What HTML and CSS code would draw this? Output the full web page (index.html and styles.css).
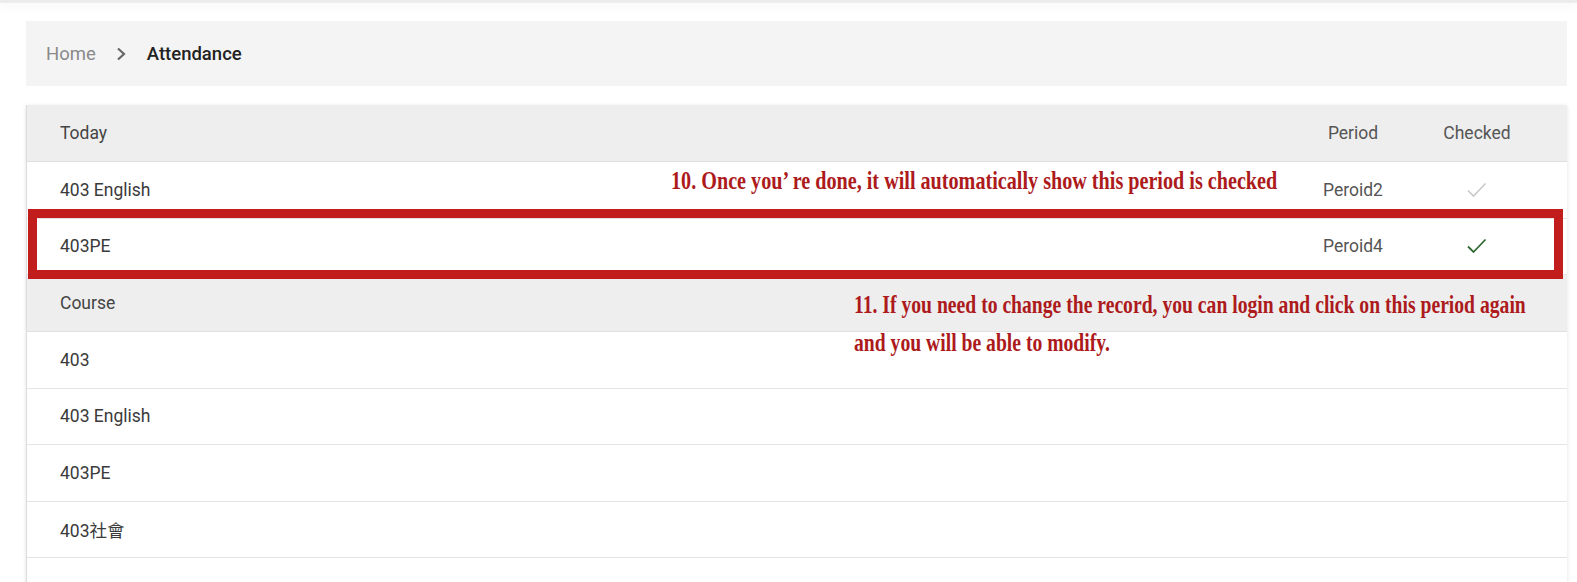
FILE: index.html
```html
<!DOCTYPE html>
<html lang="en">
<head>
<meta charset="utf-8">
<title>Attendance</title>
<link rel="stylesheet" href="styles.css">
</head>
<body>
<div class="topbar"></div>
<main class="page">
  <nav class="crumbs">
    <span class="crumb-home">Home</span>
    <svg class="crumb-sep" width="10" height="14" viewBox="0 0 10 14"><polyline points="2,1.5 8,7 2,12.5" fill="none" stroke="#666" stroke-width="2.2"/></svg>
    <span class="crumb-current">Attendance</span>
  </nav>

  <section class="card">
    <div class="row head">
      <div class="cell name">Today</div>
      <div class="cell mid">Period</div>
      <div class="cell mid">Checked</div>
    </div>
    <div class="row">
      <div class="cell name">403 English</div>
      <div class="cell mid">Peroid2</div>
      <div class="cell mid"><svg class="check grey" width="20" height="18" viewBox="0 0 20 18"><polyline points="1,9.5 6.5,15 18.5,2.5" fill="none" stroke-width="1.6"/></svg></div>
    </div>
    <div class="row">
      <div class="cell name">403PE</div>
      <div class="cell mid">Peroid4</div>
      <div class="cell mid"><svg class="check green" width="20" height="18" viewBox="0 0 20 18"><polyline points="1,9.5 6.5,15 18.5,2.5" fill="none" stroke-width="1.8"/></svg></div>
    </div>
    <div class="row head">
      <div class="cell name">Course</div>
    </div>
    <div class="row"><div class="cell name">403</div></div>
    <div class="row"><div class="cell name">403 English</div></div>
    <div class="row"><div class="cell name">403PE</div></div>
    <div class="row"><div class="cell name">403社會</div></div>
    <div class="row tail"></div>
  </section>

  <div class="highlight"></div>
  <svg class="note note-10" width="613" height="38" viewBox="0 0 760 38" preserveAspectRatio="none">
    <text x="0" y="27">10. Once you’ re done, it will automatically show this period is checked</text>
  </svg>
  <svg class="note note-11" width="684" height="76" viewBox="0 0 870 76" preserveAspectRatio="none">
    <text x="0" y="27">11. If you need to change the record, you can login and click on this period again</text>
    <text x="0" y="65">and you will be able to modify.</text>
  </svg>
</main>
</body>
</html>
```

FILE: styles.css
```css
html, body {
  margin: 0;
  padding: 0;
  background: #ffffff;
}
html {
  overflow: hidden;
}
body {
  font-family: Roboto, "Noto Sans CJK TC", "Noto Sans", sans-serif;
  font-size: 17.5px;
  color: #3a3a3a;
  width: 1577px;
  height: 582px;
  overflow: hidden;
}
.topbar {
  height: 3px;
  background: #ececec;
  box-shadow: 0 3px 10px rgba(0, 0, 0, 0.07);
}
.page {
  position: relative;
  padding: 18px 10px 0 26px;
}
.crumbs {
  height: 65px;
  background: #f4f4f4;
  display: flex;
  align-items: center;
  padding-left: 20px;
  font-size: 18.5px;
}
.crumb-home {
  color: #8a8a8a;
}
.crumb-sep {
  margin: 0 21px 0 20px;
}
.crumb-current {
  color: #222;
  font-weight: 500;
}
.card {
  margin-top: 19px;
  border-left: 1px solid #dcdcdc;
  box-shadow: 0 1px 4px rgba(0, 0, 0, 0.12);
  background: #fff;
}
.row {
  display: grid;
  grid-template-columns: 1fr 124px 124px 28px;
  height: 56.5px;
  box-sizing: border-box;
  border-bottom: 1px solid #e4e4e4;
  align-items: center;
}
.row.head {
  background: #eeeeee;
  height: 57px;
  color: #444;
  border-bottom-color: #e0e0e0;
}
.row.tail {
  height: 25px;
  border-bottom: none;
}
.cell.name {
  padding-left: 33px;
}
.cell.mid {
  text-align: center;
  color: #555;
  display: flex;
  justify-content: center;
}
.check.grey polyline { stroke: #c9c9c9; }
.check.green polyline { stroke: #2f6b33; }

.highlight {
  position: absolute;
  left: 28px;
  top: 206px;
  width: 1535px;
  height: 70px;
  box-sizing: border-box;
  border: 9px solid #c21d1d;
}
.note {
  position: absolute;
  display: block;
}
.note text {
  font-family: "Liberation Serif", "Times New Roman", serif;
  font-weight: bold;
  font-size: 25px;
  fill: #ad1a1c;
}
.note-10 {
  left: 671px;
  top: 159px;
}
.note-11 {
  left: 854px;
  top: 283px;
}
```
